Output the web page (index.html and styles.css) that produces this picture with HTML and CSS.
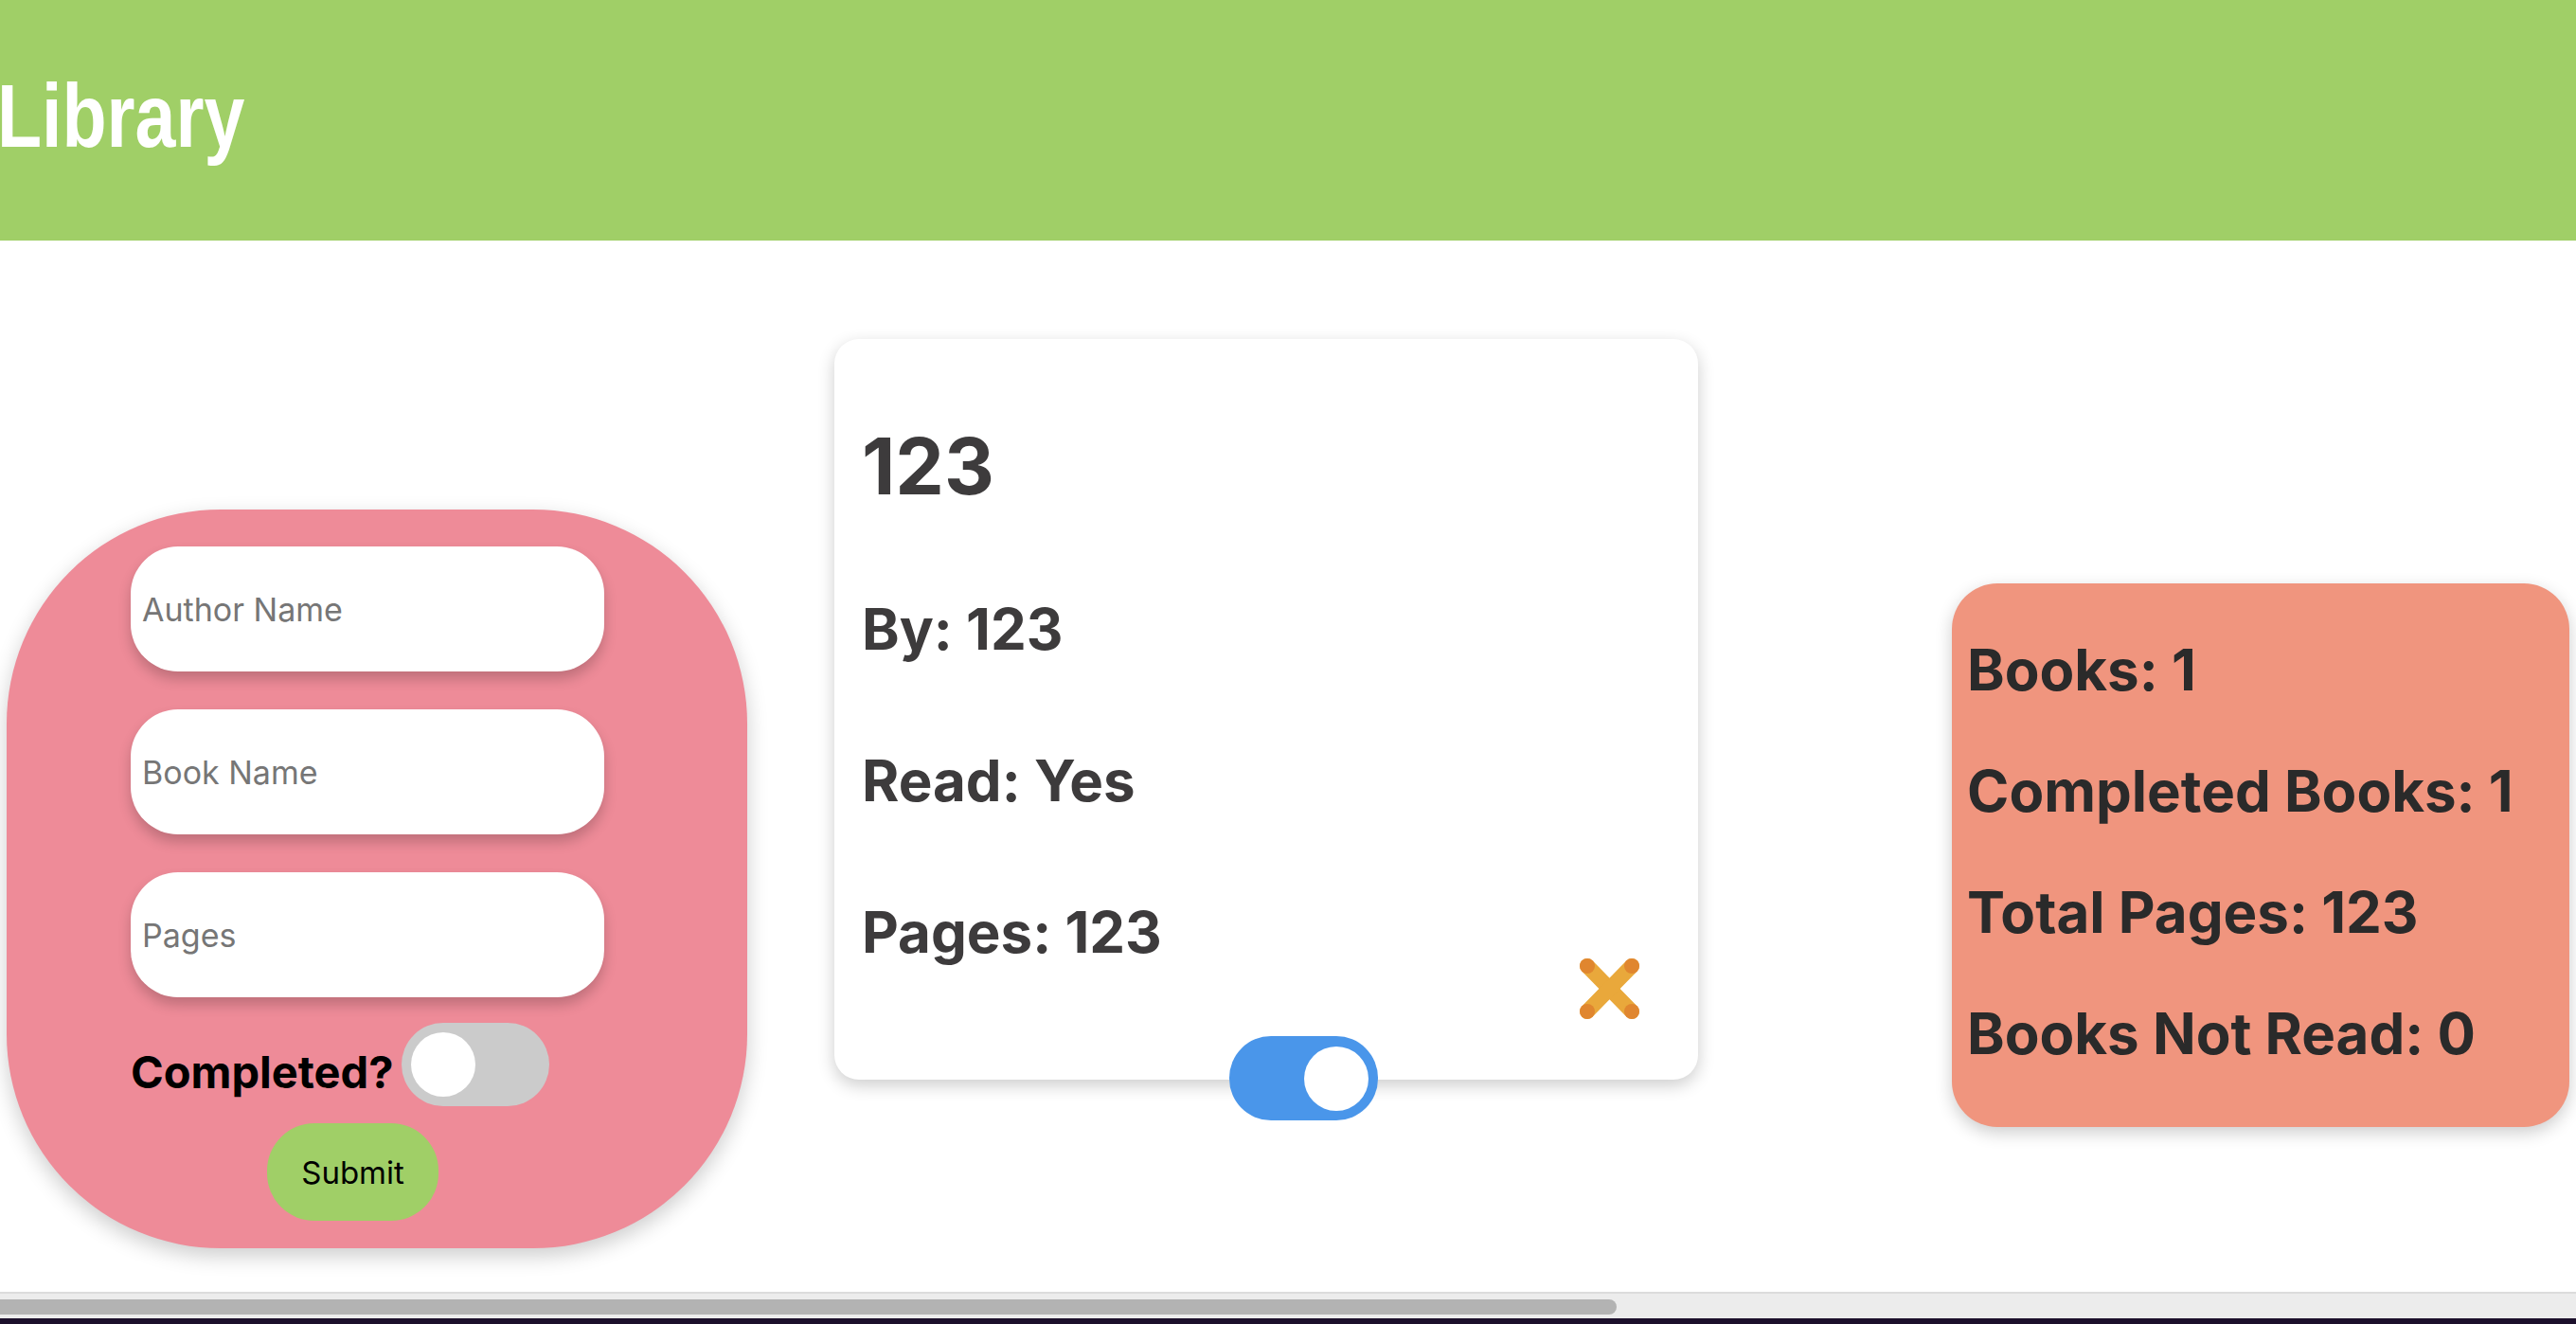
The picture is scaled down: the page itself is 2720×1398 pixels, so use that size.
FILE: index.html
```html
<!DOCTYPE html>
<html lang="en">
<head>
<meta charset="utf-8">
<title>Library</title>
<link rel="stylesheet" href="styles.css">
</head>
<body>
<header class="top-bar">
  <h1 class="brand">Library</h1>
</header>
<main class="content">
  <form class="book-form">
    <input class="field" type="text" placeholder="Author Name">
    <input class="field" type="text" placeholder="Book Name">
    <input class="field" type="text" placeholder="Pages">
    <div class="completed-row">
      <span class="completed-label">Completed?</span>
      <span class="switch"><span class="knob"></span></span>
    </div>
    <button class="submit-btn" type="button">Submit</button>
  </form>

  <article class="book-card">
    <h2 class="book-title">123</h2>
    <p class="book-line">By: 123</p>
    <p class="book-line">Read: Yes</p>
    <p class="book-line">Pages: 123</p>
    <svg class="delete-icon" width="65" height="64" viewBox="0 0 65 64">
      <line x1="9" y1="8" x2="56" y2="56" stroke="#e9a83b" stroke-width="16" stroke-linecap="round"/>
      <line x1="56" y1="8" x2="9" y2="56" stroke="#e9a83b" stroke-width="16" stroke-linecap="round"/>
      <circle cx="9" cy="8" r="8" fill="#e0862f"/>
      <circle cx="56" cy="8" r="8" fill="#e0862f"/>
      <circle cx="9" cy="56" r="8" fill="#e0862f"/>
      <circle cx="56" cy="56" r="8" fill="#e0862f"/>
    </svg>
    <span class="switch switch-on card-switch"><span class="knob"></span></span>
  </article>

  <section class="stats">
    <p class="stat-line">Books: 1</p>
    <p class="stat-line">Completed Books: 1</p>
    <p class="stat-line">Total Pages: 123</p>
    <p class="stat-line">Books Not Read: 0</p>
  </section>
</main>
<div class="h-scroll"><div class="h-thumb"></div></div>
</body>
</html>
```

FILE: styles.css
```css
html, body {
  margin: 0;
  padding: 0;
}

body {
  width: 2720px;
  height: 1398px;
  overflow: hidden;
  display: flex;
  flex-direction: column;
  background: #ffffff;
  font-family: Inter, "Noto Sans", sans-serif;
}

.top-bar {
  height: 254px;
  flex: 0 0 254px;
  box-sizing: border-box;
  background: #a0cf67;
  padding-bottom: 8px;
}

.brand {
  margin: 0 0 0 -3px;
  font-family: "Liberation Sans", Arial, sans-serif;
  font-weight: bold;
  font-size: 94px;
  line-height: 246px;
  color: #ffffff;
  transform: scaleX(0.82);
  transform-origin: left center;
  white-space: nowrap;
}

.content {
  flex: 1 1 auto;
  display: flex;
  align-items: flex-start;
  padding: 0 7px;
}

/* ---------- form panel ---------- */
.book-form {
  flex: 0 0 782px;
  width: 782px;
  height: 780px;
  box-sizing: border-box;
  margin-top: 284px;
  padding: 39px 0 0 131px;
  background: #ee8b98;
  border-radius: 226px;
  box-shadow: 0 8px 22px rgba(0, 0, 0, 0.2);
  display: flex;
  flex-direction: column;
  align-items: flex-start;
}

.field {
  width: 500px;
  height: 132px;
  box-sizing: border-box;
  margin: 0 0 40px 0;
  padding: 0 12px;
  border: none;
  outline: none;
  border-radius: 50px;
  background: #ffffff;
  box-shadow: 0 8px 14px rgba(0, 0, 0, 0.2);
  font-family: Inter, "Noto Sans", sans-serif;
  font-size: 34px;
  color: #222;
}

.field:nth-of-type(3) {
  margin-bottom: 27px;
}

.field::placeholder {
  color: #767676;
}

.completed-row {
  display: flex;
  align-items: center;
  gap: 8px;
}

.completed-label {
  font-size: 47px;
  font-weight: 700;
  color: #000000;
  margin-top: 14px;
}

.switch {
  display: inline-flex;
  align-items: center;
  width: 156px;
  height: 88px;
  box-sizing: border-box;
  padding: 0 10px;
  border-radius: 44px;
  background: #cbcbcb;
}

.switch-on {
  background: #4a96ea;
  justify-content: flex-end;
}

.knob {
  width: 68px;
  height: 68px;
  border-radius: 50%;
  background: #ffffff;
}

.submit-btn {
  margin: 18px 0 0 144px;
  width: 181px;
  height: 103px;
  border: none;
  border-radius: 50px;
  background: #a0cf67;
  color: #000000;
  font-family: Inter, "Noto Sans", sans-serif;
  font-size: 33px;
  padding: 0;
}

/* ---------- book card ---------- */
.book-card {
  position: relative;
  flex: 0 0 912px;
  width: 912px;
  height: 782px;
  box-sizing: border-box;
  margin: 104px 0 0 92px;
  padding: 85px 0 0 29px;
  background: #ffffff;
  border-radius: 26px;
  box-shadow: 0 6px 18px rgba(0, 0, 0, 0.2);
  color: #3d3b3c;
}

.book-title {
  margin: 0 0 41px 0;
  font-size: 82px;
  font-weight: 700;
  line-height: 100px;
}

.book-line {
  margin: 0;
  font-size: 60px;
  font-weight: 700;
  line-height: 160px;
}

.delete-icon {
  position: absolute;
  left: 786px;
  top: 654px;
}

.card-switch {
  position: absolute;
  left: 417px;
  top: 736px;
  width: 157px;
  height: 89px;
}

/* ---------- stats ---------- */
.stats {
  flex: 0 0 652px;
  width: 652px;
  height: 574px;
  box-sizing: border-box;
  margin: 362px 0 0 auto;
  padding: 27px 0 0 16px;
  background: #f0957e;
  border-radius: 48px;
  box-shadow: 0 6px 18px rgba(0, 0, 0, 0.2);
  color: #2a2a2a;
}

.stat-line {
  margin: 0;
  font-size: 60px;
  font-weight: 700;
  line-height: 128px;
  white-space: nowrap;
}

/* ---------- fake horizontal scrollbar ---------- */
.h-scroll {
  flex: 0 0 34px;
  height: 34px;
  box-sizing: border-box;
  border-top: 2px solid #dcdcdc;
  border-bottom: 6px solid #1c0f2b;
  background: #ececec;
  padding-top: 6px;
}

.h-thumb {
  width: 1707px;
  height: 16px;
  border-radius: 0 8px 8px 0;
  background: #b3b3b3;
}
```
